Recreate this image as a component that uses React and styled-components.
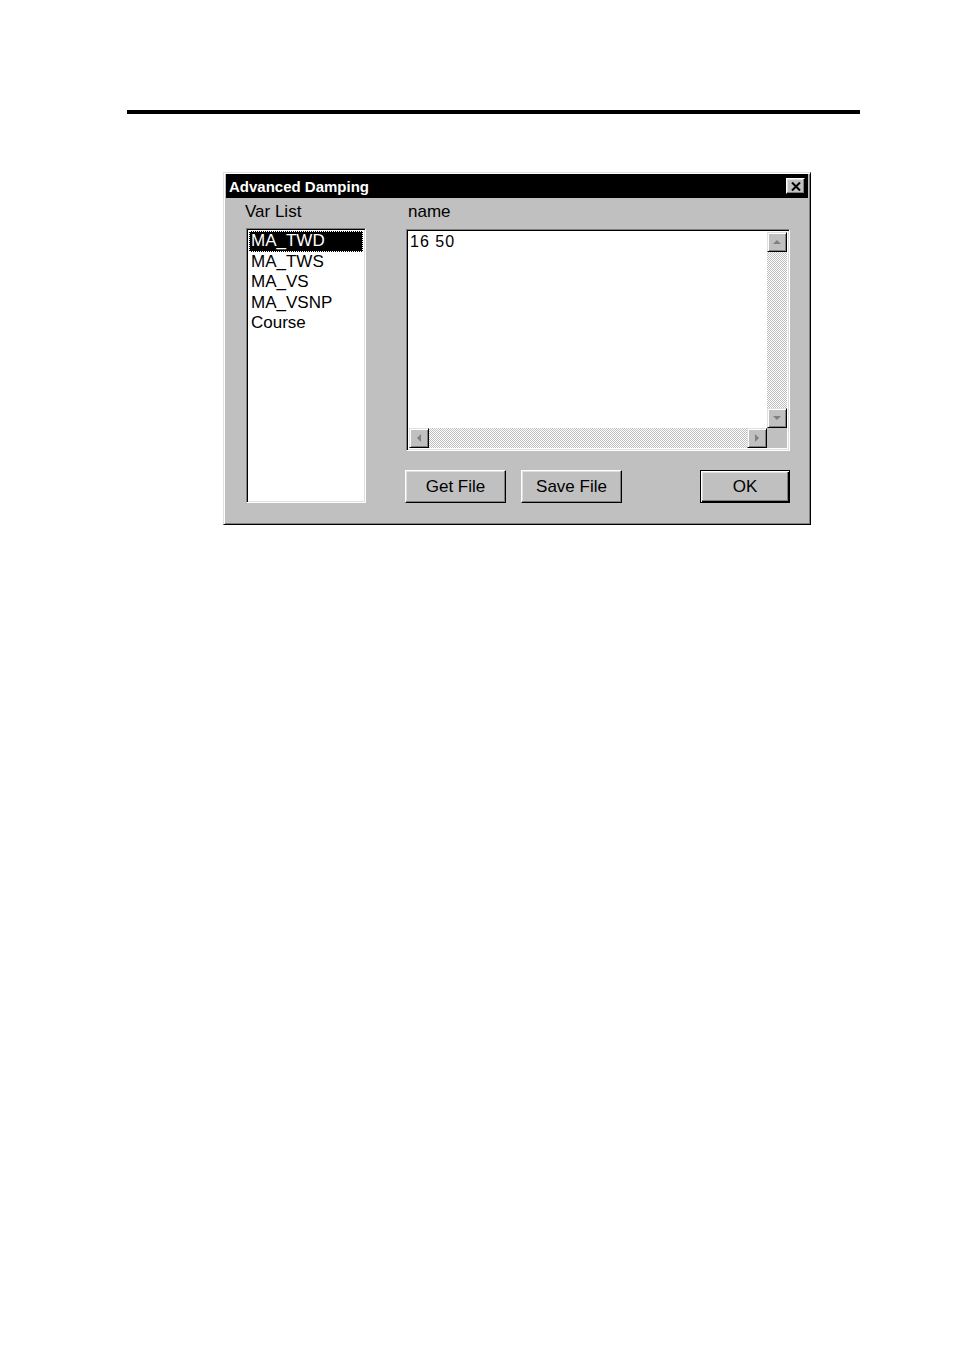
import React from "react";
import styled, { createGlobalStyle } from "styled-components";

const GlobalStyle = createGlobalStyle`
  body {
    margin: 0;
    background: #fff;
    font-family: "Liberation Sans", Arial, sans-serif;
  }
`;

const Page = styled.div`
  width: 954px;
  height: 1350px;
  padding-top: 110px;
  box-sizing: border-box;
`;

const Rule = styled.hr`
  margin: 0 0 0 127px;
  width: 733px;
  height: 4px;
  border: 0;
  background: #000;
`;

const Dialog = styled.div`
  margin: 58px 0 0 223px;
  width: 588px;
  height: 353px;
  box-sizing: border-box;
  padding: 1px 2px 3px 2px;
  background: #c0c0c0;
  border: 1px solid;
  border-color: #dfdfdf #000 #000 #dfdfdf;
  box-shadow: inset 1px 1px #fff, inset -1px -1px #808080;
`;

const TitleBar = styled.div`
  height: 24px;
  background: #000;
  display: flex;
  align-items: center;
  justify-content: space-between;
  padding: 0 3px 0 3px;
`;

const Title = styled.span`
  color: #fff;
  font-weight: bold;
  font-size: 15px;
`;

const CloseButton = styled.button`
  width: 19px;
  height: 16px;
  padding: 0;
  display: flex;
  align-items: center;
  justify-content: center;
  background: #c0c0c0;
  border: 1px solid;
  border-color: #fff #000 #000 #fff;
  box-shadow: inset -1px -1px #808080, inset 1px 1px #dfdfdf;
`;

const Body = styled.div`
  display: flex;
  gap: 40px;
  padding: 4px 0 0 20px;
`;

const Column = styled.div`
  display: flex;
  flex-direction: column;
  width: ${p => p.$width}px;
`;

const Label = styled.div`
  font-size: 17px;
  line-height: 20px;
  height: 20px;
  color: #000;
  margin-left: ${p => p.$indent}px;
`;

const ListBox = styled.ul`
  list-style: none;
  margin: 6px 0 0 0;
  height: 275px;
  box-sizing: border-box;
  background: #fff;
  border: 1px solid;
  border-color: #808080 #fff #fff #808080;
  box-shadow: inset 1px 1px #000, inset -1px -1px #dfdfdf;
  padding: 2px;
`;

const ListItem = styled.li`
  height: 20.6px;
  line-height: 20px;
  font-size: 17px;
  padding-left: 2px;
  color: ${p => (p.$selected ? "#fff" : "#000")};
  background: ${p => (p.$selected ? "#000" : "transparent")};
  outline: ${p => (p.$selected ? "1px dotted #fff" : "none")};
  outline-offset: -1px;
`;

const EditBox = styled.div`
  margin-top: 7px;
  height: 222px;
  box-sizing: border-box;
  background: #fff;
  border: 1px solid;
  border-color: #808080 #fff #fff #808080;
  box-shadow: inset 1px 1px #000, inset -1px -1px #dfdfdf;
  padding: 2px;
  display: grid;
  grid-template-columns: 1fr 20px;
  grid-template-rows: 1fr 20px;
`;

const EditText = styled.div`
  font-size: 16px;
  letter-spacing: 1px;
  line-height: 20px;
  padding: 0 0 0 1px;
  color: #000;
`;

const track = `
  background-color: #fff;
  background-image: repeating-conic-gradient(#c0c0c0 0 25%, #fff 0 50%);
  background-size: 2px 2px;
`;

const VScroll = styled.div`
  ${track}
  display: flex;
  flex-direction: column;
  justify-content: space-between;
`;

const HScroll = styled.div`
  ${track}
  display: flex;
  justify-content: space-between;
`;

const Corner = styled.div`
  background: #c0c0c0;
`;

const ScrollButton = styled.div`
  width: 20px;
  height: 20px;
  box-sizing: border-box;
  background: #c0c0c0;
  border: 1px solid;
  border-color: #dfdfdf #000 #000 #dfdfdf;
  box-shadow: inset 1px 1px #fff, inset -1px -1px #808080;
  display: flex;
  align-items: center;
  justify-content: center;
`;

const ButtonRow = styled.div`
  margin-top: 19px;
  margin-left: -1px;
  display: flex;
  gap: 15px;
`;

const Button = styled.button`
  width: ${p => p.$width}px;
  height: 33px;
  margin-left: ${p => (p.$push ? "auto" : "0")};
  box-sizing: border-box;
  padding: 0;
  font-family: "Liberation Sans", Arial, sans-serif;
  font-size: 17px;
  color: #000;
  background: #c0c0c0;
  border: 1px solid;
  border-color: ${p => (p.$default ? "#000" : "#fff #000 #000 #fff")};
  box-shadow: ${p =>
    p.$default
      ? "inset 1px 1px #fff, inset -1px -1px #000, inset -2px -2px #808080, inset 2px 2px #dfdfdf"
      : "inset -1px -1px #808080, inset 1px 1px #dfdfdf"};
`;

const Arrow = ({ dir }) => {
  const pts = {
    up: "1,6 5,2 9,6",
    down: "1,2 5,6 9,2",
    left: "6,1 2,5 6,9",
    right: "2,1 6,5 2,9",
  }[dir];
  const vertical = dir === "up" || dir === "down";
  return (
    <svg width={vertical ? 10 : 8} height={vertical ? 8 : 10} viewBox={vertical ? "0 0 10 8" : "0 0 8 10"}>
      <polygon points={pts} fill="#808080" />
    </svg>
  );
};

const items = ["MA_TWD", "MA_TWS", "MA_VS", "MA_VSNP", "Course"];

export default function App() {
  return (
    <>
      <GlobalStyle />
      <Page>
        <Rule />
        <Dialog>
          <TitleBar>
            <Title>Advanced Damping</Title>
            <CloseButton aria-label="Close">
              <svg width="10" height="9" viewBox="0 0 10 9">
                <path d="M1 0.5 L9 8.5 M9 0.5 L1 8.5" stroke="#000" strokeWidth="2" />
              </svg>
            </CloseButton>
          </TitleBar>
          <Body>
            <Column $width={120}>
              <Label $indent={-1}>Var List</Label>
              <ListBox>
                {items.map((it, i) => (
                  <ListItem key={it} $selected={i === 0}>
                    {it}
                  </ListItem>
                ))}
              </ListBox>
            </Column>
            <Column $width={384}>
              <Label $indent={2}>name</Label>
              <EditBox>
                <EditText>16 50</EditText>
                <VScroll>
                  <ScrollButton>
                    <Arrow dir="up" />
                  </ScrollButton>
                  <ScrollButton>
                    <Arrow dir="down" />
                  </ScrollButton>
                </VScroll>
                <HScroll>
                  <ScrollButton>
                    <Arrow dir="left" />
                  </ScrollButton>
                  <ScrollButton>
                    <Arrow dir="right" />
                  </ScrollButton>
                </HScroll>
                <Corner />
              </EditBox>
              <ButtonRow>
                <Button $width={101}>Get File</Button>
                <Button $width={101}>Save File</Button>
                <Button $width={90} $push $default>
                  OK
                </Button>
              </ButtonRow>
            </Column>
          </Body>
        </Dialog>
      </Page>
    </>
  );
}
